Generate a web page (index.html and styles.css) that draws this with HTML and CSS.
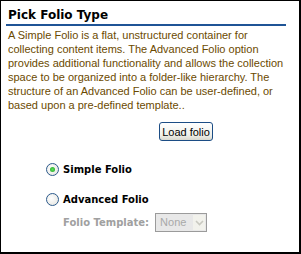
FILE: index.html
```html
<!DOCTYPE html>
<html lang="en">
<head>
    <meta charset="UTF-8">
    <title>Pick Folio Type</title>
    <link rel="stylesheet" href="styles.css">
</head>
<body>
    <div class="panel">
        <h1 class="panel-title">Pick Folio Type</h1>
        <p class="intro">A Simple Folio is a flat, unstructured container for<br>
            collecting content items. The Advanced Folio option<br>
            provides additional functionality and allows the collection<br>
            space to be organized into a folder-like hierarchy. The<br>
            structure of an Advanced Folio can be user-defined, or<br>
            based upon a pre-defined template..</p>
        <div class="actions">
            <button class="load-btn">Load folio</button>
        </div>
        <div class="options">
            <label class="option">
                <span class="radio checked"></span>
                <span class="option-label">Simple Folio</span>
            </label>
            <label class="option">
                <span class="radio"></span>
                <span class="option-label">Advanced Folio</span>
            </label>
            <div class="template-row">
                <span class="template-label">Folio Template:</span>
                <span class="template-select">
                    <span class="select-value">None</span>
                    <span class="select-arrow">
                        <svg width="9" height="6" viewBox="0 0 9 6"><path d="M1 1 L4.5 4.5 L8 1" fill="none" stroke="#c9c9c0" stroke-width="1.6"/></svg>
                    </span>
                </span>
            </div>
        </div>
    </div>
</body>
</html>
```

FILE: styles.css
```css
body {
    margin: 0;
    background: #fff;
    font-family: "DejaVu Sans", Verdana, sans-serif;
}
.panel {
    width: 301px;
    height: 254px;
    box-sizing: border-box;
    border-top: 1px solid #000;
    border-left: 1px solid #000;
    border-right: 2px solid #000;
    border-bottom: 2px solid #000;
    padding: 7px 13px 0 5px;
}
.panel-title {
    margin: 0;
    padding: 0 0 1px 2px;
    font-size: 12px;
    font-weight: bold;
    color: #000;
    border-bottom: 2px solid #1f5496;
    line-height: 15px;
}
.intro {
    margin: 2px 0 0 2px;
    font-family: "Liberation Sans", Arial, sans-serif;
    font-size: 11px;
    line-height: 14px;
    color: #6b4a00;
    white-space: nowrap;
}
.actions {
    display: flex;
    margin-top: 10px;
    padding-left: 153px;
}
.load-btn {
    font-family: "Liberation Sans", Arial, sans-serif;
    font-size: 11px;
    width: 54px;
    height: 19px;
    padding: 0;
    color: #000;
    border: 1px solid #1c4d85;
    border-radius: 3px;
    background: linear-gradient(#ffffff, #f0f0ea 70%, #d8d8ce);
}
.options {
    display: flex;
    flex-direction: column;
    padding-left: 40px;
    margin-top: 22px;
}
.option {
    display: flex;
    align-items: center;
    gap: 4px;
    height: 13px;
    margin-bottom: 17px;
}
.radio {
    width: 11px;
    height: 11px;
    border-radius: 50%;
    border: 1px solid #2c5a8c;
    background: radial-gradient(circle at 40% 40%, #fff, #e2e2dc);
    display: flex;
    align-items: center;
    justify-content: center;
}
.radio.checked::after {
    content: "";
    width: 5px;
    height: 5px;
    border-radius: 50%;
    background: radial-gradient(circle, #5ce05c, #21a121);
}
.option-label {
    font-size: 10px;
    font-weight: bold;
    color: #000;
}
.template-row {
    display: flex;
    align-items: center;
    gap: 6px;
    padding-left: 17px;
    margin-top: -10px;
}
.template-label {
    font-size: 10px;
    font-weight: bold;
    color: #a0a0a0;
}
.template-select {
    display: flex;
    align-items: stretch;
    width: 50px;
    height: 17px;
    border: 1px solid #9b9b9b;
    background: #e8e8e8;
}
.select-value {
    flex: 1;
    font-family: "Liberation Sans", Arial, sans-serif;
    font-size: 11px;
    line-height: 17px;
    padding-left: 4px;
    color: #a8a8a8;
}
.select-arrow {
    width: 12px;
    margin: 1px;
    background: #f2f2ec;
    display: flex;
    align-items: center;
    justify-content: center;
}
```
